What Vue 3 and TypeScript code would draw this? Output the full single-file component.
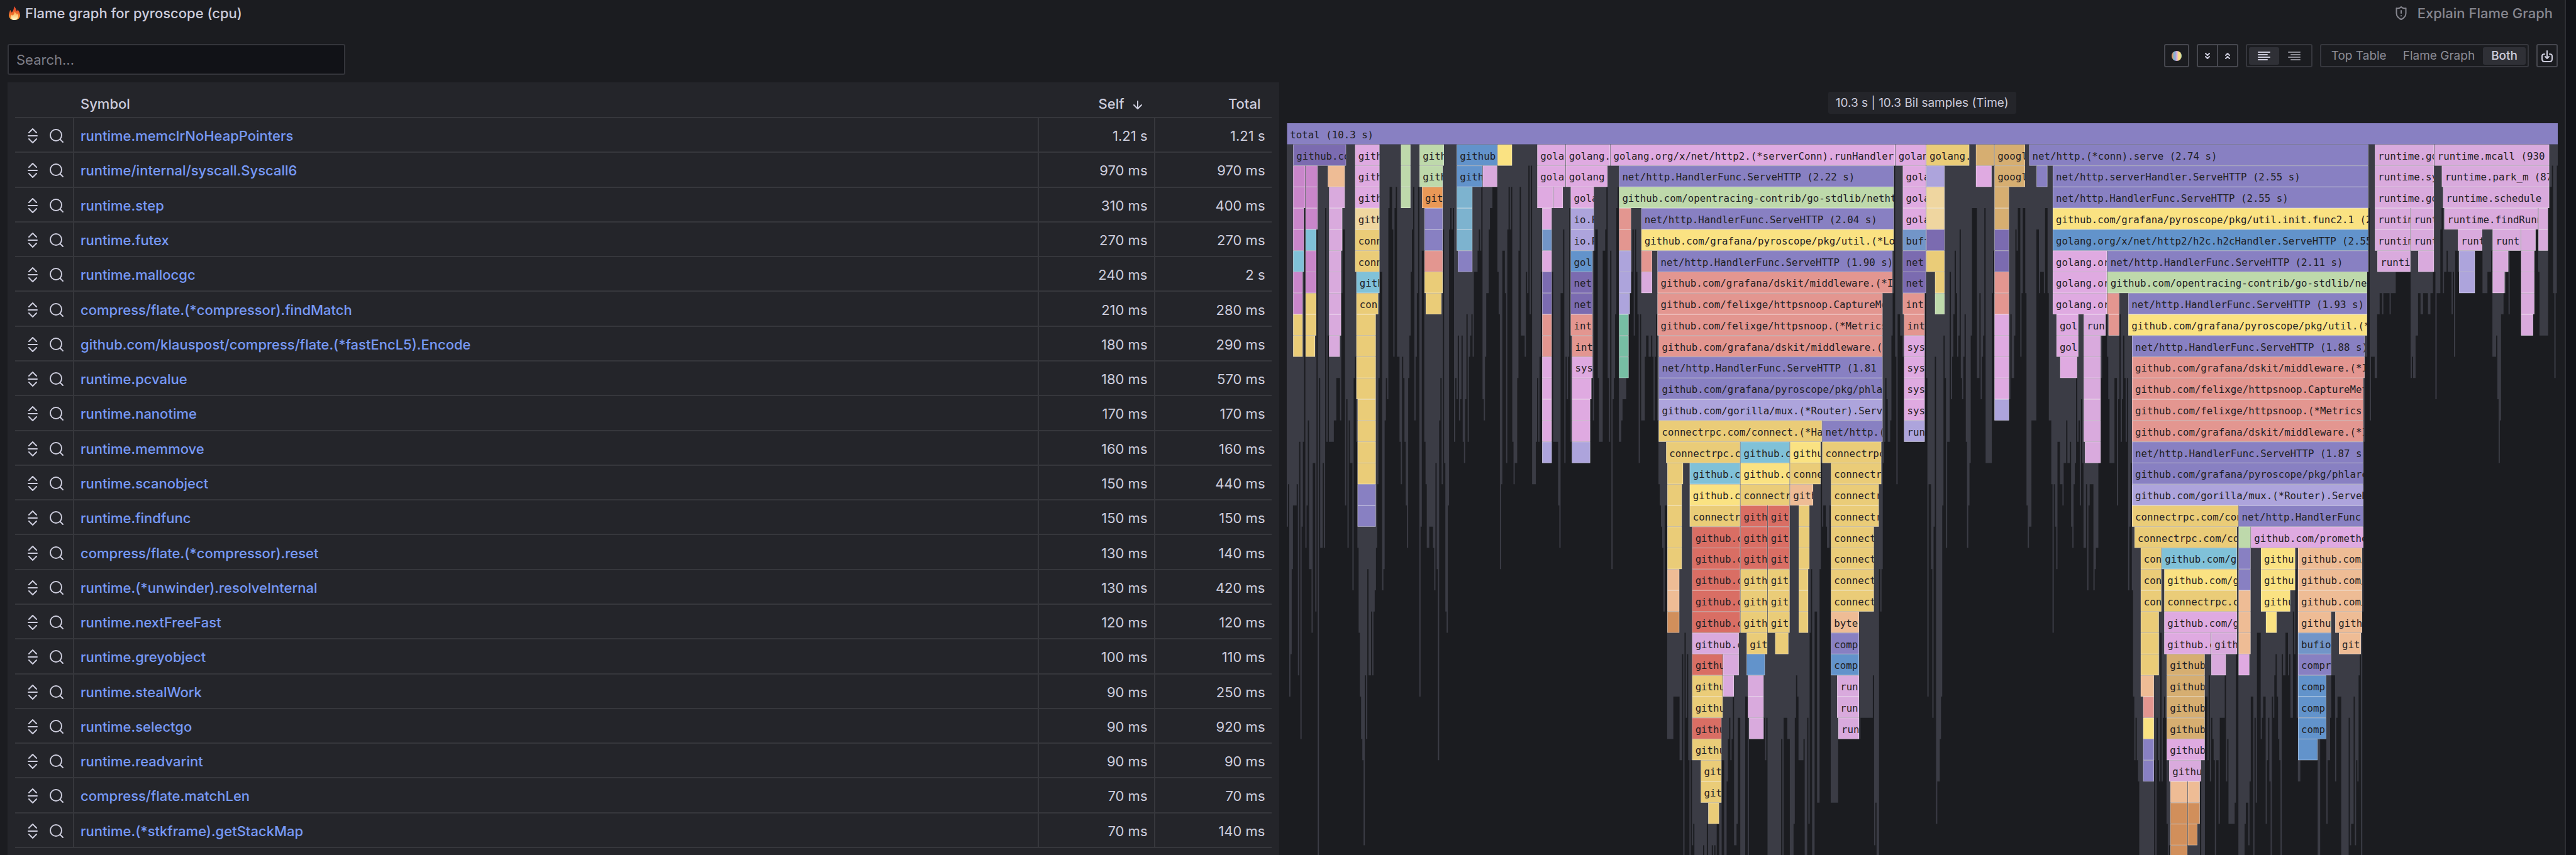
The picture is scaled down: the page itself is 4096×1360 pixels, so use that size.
<script setup lang="ts">
import { computed, ref } from 'vue'

interface SymbolRow { name: string; self: string; total: string }

const symbols: SymbolRow[] = [
  { name: 'runtime.memclrNoHeapPointers', self: '1.21 s', total: '1.21 s' },
  { name: 'runtime/internal/syscall.Syscall6', self: '970 ms', total: '970 ms' },
  { name: 'runtime.step', self: '310 ms', total: '400 ms' },
  { name: 'runtime.futex', self: '270 ms', total: '270 ms' },
  { name: 'runtime.mallocgc', self: '240 ms', total: '2 s' },
  { name: 'compress/flate.(*compressor).findMatch', self: '210 ms', total: '280 ms' },
  { name: 'github.com/klauspost/compress/flate.(*fastEncL5).Encode', self: '180 ms', total: '290 ms' },
  { name: 'runtime.pcvalue', self: '180 ms', total: '570 ms' },
  { name: 'runtime.nanotime', self: '170 ms', total: '170 ms' },
  { name: 'runtime.memmove', self: '160 ms', total: '160 ms' },
  { name: 'runtime.scanobject', self: '150 ms', total: '440 ms' },
  { name: 'runtime.findfunc', self: '150 ms', total: '150 ms' },
  { name: 'compress/flate.(*compressor).reset', self: '130 ms', total: '140 ms' },
  { name: 'runtime.(*unwinder).resolveInternal', self: '130 ms', total: '420 ms' },
  { name: 'runtime.nextFreeFast', self: '120 ms', total: '120 ms' },
  { name: 'runtime.greyobject', self: '100 ms', total: '110 ms' },
  { name: 'runtime.stealWork', self: '90 ms', total: '250 ms' },
  { name: 'runtime.selectgo', self: '90 ms', total: '920 ms' },
  { name: 'runtime.readvarint', self: '90 ms', total: '90 ms' },
  { name: 'compress/flate.matchLen', self: '70 ms', total: '70 ms' },
  { name: 'runtime.(*stkframe).getStackMap', self: '70 ms', total: '140 ms' },
]

const query = ref('')
const align = ref('left')
const view = ref('Both')
const views = ['Top Table', 'Flame Graph', 'Both']

const visibleSymbols = computed(() =>
  symbols.filter((s) => s.name.toLowerCase().includes(query.value.toLowerCase())),
)

// Flame graph geometry: every sample is UNIT wide and every level ROW high.
const SAMPLES = 1026
const LEVELS = 35
const UNIT = 7
const ROW = 120

const palette: Record<string, string> = {
  P: '#8880c2', D: '#7b6bb0', L: '#ada4dc', K: '#dfaae1', R: '#d9aadd',
  M: '#c986ca', T: '#80c1d8', Y: '#eacc78', B: '#fae282', G: '#bed9ab',
  O: '#e99857', S: '#e39690', X: '#d96e64', U: '#6293cb', V: '#7295c8',
  W: '#7db3cf', E: '#efd6a0', A: '#d6ae71', H: '#eebc95', N: '#d18f5b',
  Z: '#77bea4',
}

// Stack depth by sample: "first sample:depth", valid up to the next entry.
const depths = `
0:19 1:17 2:27 3:25 4:21 5:18 8:17 9:26 10:15 11:29 12:19 13:15 14:4 15:20 16:18 17:14 18:21 20:24
21:16 23:23 24:5 25:35 26:12 27:20 29:16 30:20 31:4 32:15 33:10 34:15 38:14 40:12 43:14 44:8 45:5
47:18 48:13 49:20 50:14 51:16 53:22 54:12 55:11 56:15 57:20 58:24 59:27 60:29 61:30 62:34 63:26
64:29 65:21 66:26 68:23 69:26 70:23 71:22 72:20 73:17 74:12 75:7 77:22 78:21 79:14 80:12 81:13
82:4 83:3 85:5 86:11 87:4 88:3 89:11 91:15 92:17 93:11 94:12 95:15 96:18 97:20 98:12 99:10 100:7
101:5 102:3 103:14 104:11 105:8 106:3 107:27 108:19 109:6 111:15 112:17 113:20 115:19 118:20
119:22 120:16 121:21 122:30 123:14 124:12 125:17 126:5 127:16 128:23 129:24 130:18 131:5 132:4
133:5 134:4 135:15 136:12 137:13 138:10 139:14 140:13 141:10 142:15 143:16 144:13 145:9 146:15
147:11 148:10 149:9 150:11 151:7 154:6 155:5 156:6 157:3 158:13 159:14 160:11 161:8 163:5 164:4
166:3 170:7 171:9 172:21 173:17 174:6 176:8 177:16 178:5 179:3 180:5 181:3 182:15 183:17 184:16
186:12 187:6 188:3 189:10 192:11 193:7 194:8 195:2 196:9 197:2 198:17 201:15 202:12 203:15 204:11
205:7 206:16 214:7 215:15 219:18 220:20 221:8 223:5 224:16 225:11 226:13 227:11 228:4 229:15
230:16 245:13 246:12 247:14 248:6 249:5 251:12 252:15 255:6 257:5 258:3 259:12 260:15 261:6
262:21 263:13 264:12 265:9 266:4 267:3 268:15 270:14 271:13 274:12 276:9 277:8 278:7 279:5 280:10
281:5 282:7 283:9 284:16 285:9 286:14 289:11 290:10 292:11 294:10 295:11 296:14 297:11 298:9
299:14 300:17 301:18 302:19 303:20 304:23 305:18 307:29 312:27 317:30 319:25 320:35 321:24 322:28
323:25 324:30 325:35 326:30 327:34 328:33 329:35 336:34 337:35 339:33 340:35 343:34 344:35 345:34
346:35 347:33 349:35 351:30 353:35 355:31 356:29 357:28 358:30 359:29 360:27 361:34 363:33 364:28
366:35 370:27 372:35 373:29 385:28 386:30 387:28 388:35 399:29 400:35 401:28 404:29 406:35 409:33
410:28 411:26 412:27 413:30 417:29 418:35 420:28 421:33 422:24 423:21 424:35 426:23 428:32 430:21
431:16 432:19 433:18 435:19 436:20 438:18 439:32 445:29 463:28 473:26 474:34 475:32 476:35 478:21
479:23 480:21 481:16 482:15 483:12 484:13 485:15 487:14 488:10 489:8 490:2 491:11 492:17 493:9
495:10 497:11 498:15 515:8 516:12 517:27 518:17 520:21 521:28 522:19 523:11 524:33 525:31 527:29
528:27 529:18 530:10 531:12 532:20 533:15 535:7 536:13 537:11 538:9 539:6 540:8 541:11 542:10
543:5 544:12 545:13 546:11 547:9 548:15 549:20 550:18 551:16 552:10 553:4 557:12 559:8 560:13
561:11 562:10 563:4 564:16 569:8 570:6 571:14 583:13 584:9 585:12 587:10 588:5 589:6 590:4 592:11
593:8 594:4 596:8 597:18 598:20 599:19 601:14 605:5 607:8 608:7 611:8 612:4 614:8 615:14 617:17
618:24 619:17 620:19 621:21 622:15 624:17 626:18 627:16 629:14 630:16 632:15 633:19 634:20 635:17
636:16 637:12 638:15 639:14 640:18 641:13 642:16 643:20 645:17 646:22 647:18 648:17 651:22 652:21
653:20 655:16 657:12 658:10 661:9 662:11 663:13 664:16 668:12 670:18 671:13 672:9 673:15 674:13
675:10 676:12 677:15 678:12 679:22 680:19 681:16 682:22 683:27 684:30 685:28 686:30 687:31 688:35
700:30 701:35 702:28 703:30 704:31 705:24 706:31 707:28 708:27 709:28 710:33 711:35 712:34 713:35
737:31 738:35 741:27 743:30 744:26 745:31 746:28 747:29 748:30 749:35 750:30 752:33 753:28 757:26
758:31 759:29 760:33 765:32 766:25 768:35 773:33 774:32 776:34 777:31 778:27 780:35 781:28 782:32
783:24 786:29 787:28 788:27 790:33 791:30 792:28 793:31 794:35 795:27 796:28 797:26 798:25 799:27
800:29 801:30 802:35 803:25 804:26 806:24 808:26 809:25 810:28 812:23 813:25 814:21 815:28 816:31
818:30 832:35 834:29 839:33 840:30 842:28 843:26 846:31 847:28 848:27 851:35 857:28 858:34 859:33
861:27 862:34 863:30 864:31 865:26 866:25 867:35 868:23 869:15 870:11 872:7 873:4 874:14 875:11
878:12 880:9 882:8 884:9 885:8 890:9 891:8 895:7 907:12 908:11 909:12 911:10 913:8 915:9 917:8
921:9 923:8 925:7 927:13 928:8 931:5 932:4 933:8 934:7 936:6 937:7 940:9 941:7 942:11 943:6 945:7
946:8 959:6 965:8 969:7 972:6 973:11 976:10 977:13 978:16 979:14 980:9 982:8 984:7 986:9 987:6
996:10 1006:9 1007:6 1008:5 1010:7 1011:10 1018:4 1019:3 1021:2 1022:8 1023:12 1024:8 1025:2`

// Outline of everything below the root; frames too narrow for a colour keep this fill.
const silhouette = computed(() => {
  const steps = depths.trim().split(/\s+/).map((entry) => entry.split(':').map(Number))
  let d = `M0 ${ROW}`
  for (const [start, depth] of steps) d += `H${start * UNIT}V${depth * ROW}`
  return `${d}H${SAMPLES * UNIT}V${ROW}Z`
})

// One line per frame: first level, last level, first sample, end sample, colour, label.
const frameData = `
0 0 0 1026 P total (10.3 s)
1 1 5 48 D github.co
2 3 5 15 M
4 5 5 14 M
6 6 5 14 T
7 8 5 13 M
9 10 5 13 Y
2 4 15 25 M
5 5 15 24 T
6 7 15 24 M
8 9 15 24 Y
10 10 15 23 Y
2 2 33 47 H
3 3 34 47 R
4 5 34 45 R
6 9 34 44 R
10 10 34 43 R
1 3 55 75 K gith
4 4 55 75 E gith
5 6 55 75 Y conn
7 7 56 75 T gith
8 8 56 74 Y con
9 12 56 72 Y
13 16 57 72 Y
17 18 57 72 P
1 3 92 100 G
1 1 107 127 G gith
2 2 107 126 G gith
3 3 109 126 O git
4 5 111 126 P
6 6 111 126 S
7 7 111 126 Y
8 8 112 125 Y
1 1 137 170 U github
2 2 137 158 U gith
3 5 137 150 W
6 6 138 150 P
1 1 170 182 B
2 2 158 170 R
1 2 202 225 K gola
3 3 202 215 K
3 3 215 223 K
4 4 206 214 K
5 5 206 214 V
6 6 206 214 K
7 8 206 214 D
9 10 206 214 S
11 14 206 214 K
15 15 206 214 L
1 1 225 261 K golang.
2 2 225 259 K golang
3 3 229 248 K gola
4 5 229 248 L io.R
6 6 229 247 U gol
7 8 229 247 D net
9 9 229 247 S int
10 10 230 247 S int
11 11 230 247 K sys
12 12 230 246 K
13 14 230 245 K
15 15 230 245 L
1 1 261 491 K golang.org/x/net/http2.(*serverConn).runHandler
2 2 268 490 P net/http.HandlerFunc.ServeHTTP (2.22 s)
3 3 268 490 G github.com/opentracing-contrib/go-stdlib/netht
4 5 268 278 S
6 7 268 278 L
8 8 268 277 L
9 11 268 276 Z
4 4 286 490 P net/http.HandlerFunc.ServeHTTP (2.04 s)
5 5 286 490 B github.com/grafana/pyroscope/pkg/util.(*Lo
6 6 286 295 S
7 7 286 295 R
6 6 299 489 P net/http.HandlerFunc.ServeHTTP (1.90 s)
7 7 299 489 S github.com/grafana/dskit/middleware.(*I
8 8 299 481 S github.com/felixge/httpsnoop.CaptureMe
9 9 299 481 S github.com/felixge/httpsnoop.(*Metrics
10 10 300 481 S github.com/grafana/dskit/middleware.(
11 11 300 481 P net/http.HandlerFunc.ServeHTTP (1.81
12 12 300 481 P github.com/grafana/pyroscope/pkg/phla
13 13 300 481 L github.com/gorilla/mux.(*Router).Serv
14 14 300 432 Y connectrpc.com/connect.(*Ha
14 14 432 481 P net/http.(
15 15 306 366 Y connectrpc.c
15 15 366 406 T github.c
15 15 406 431 B githu
15 15 432 480 Y connectrpc
16 16 307 320 Y
17 20 307 319 Y
21 22 307 317 H
23 23 307 317 N
16 16 325 366 T github.c
17 17 325 366 B github.c
18 18 325 366 Y connectr
19 23 327 366 X github.c
24 24 327 365 R github.c
25 25 327 352 X githu
26 27 327 352 Y githu
28 28 327 351 X githu
29 29 327 351 Y githu
30 31 334 351 Y git
32 32 340 349 Y
25 25 352 365 R
26 26 352 361 R
16 16 366 406 B github.c
17 17 366 406 Y connectr
18 20 366 388 X gith
18 20 388 406 X git
21 23 366 388 Y gith
21 23 388 406 Y git
24 24 371 388 Y git
24 24 394 405 Y
25 25 371 386 U
26 27 372 385 R
28 28 373 385 R
16 16 406 431 Y conne
17 17 406 425 H gith
18 20 413 422 Y
21 23 413 421 Y
16 16 439 480 Y connectr
17 18 439 478 Y connectr
19 22 439 474 Y connect
23 23 439 462 H byte
24 24 439 462 P comp
25 25 439 462 U comp
26 27 444 462 R run
28 28 445 462 R run
1 1 491 516 K golan
2 4 497 516 K gola
5 5 497 516 V buff
6 7 497 516 D net
8 8 497 515 S int
9 9 498 515 S int
10 13 498 515 K sys
14 14 498 515 L run
1 1 516 551 Y golang.
2 2 516 531 L
3 4 516 531 E
5 5 516 531 D
6 6 516 531 Y
7 7 523 531 Y
8 8 523 531 G
1 1 556 571 A
2 2 556 569 K
1 2 571 596 A googl
3 4 571 583 A
5 6 571 583 D
7 8 571 583 S
9 12 571 583 K
13 13 571 583 L
1 1 599 873 P net/http.(*conn).serve (2.74 s)
2 2 605 614 P
2 2 618 873 P net/http.serverHandler.ServeHTTP (2.55 s)
3 3 618 873 P net/http.HandlerFunc.ServeHTTP (2.55 s)
4 4 618 873 B github.com/grafana/pyroscope/pkg/util.init.func2.1 (2
5 5 618 873 U golang.org/x/net/http2/h2c.h2cHandler.ServeHTTP (2.55
6 8 618 662 K golang.or
9 10 621 639 K gol
11 11 624 638 K
9 9 643 661 R run
10 14 643 657 R
15 15 644 657 R
6 6 662 873 P net/http.HandlerFunc.ServeHTTP (2.11 s)
7 7 662 872 G github.com/opentracing-contrib/go-stdlib/net
8 8 662 672 S
9 9 663 672 S
8 8 679 872 P net/http.HandlerFunc.ServeHTTP (1.93 s)
9 9 679 872 B github.com/grafana/pyroscope/pkg/util.(*
10 10 682 870 P net/http.HandlerFunc.ServeHTTP (1.88 s)
11 11 682 870 S github.com/grafana/dskit/middleware.(*I
12 12 682 869 S github.com/felixge/httpsnoop.CaptureMet
13 13 682 869 S github.com/felixge/httpsnoop.(*Metrics)
14 14 682 869 S github.com/grafana/dskit/middleware.(*I
15 15 682 869 P net/http.HandlerFunc.ServeHTTP (1.87 s)
16 16 682 869 P github.com/grafana/pyroscope/pkg/phlare
17 17 682 869 L github.com/gorilla/mux.(*Router).ServeH
18 18 682 768 Y connectrpc.com/con
18 18 768 869 P net/http.HandlerFunc
19 19 684 767 Y connectrpc.com/co
19 19 768 778 G
19 19 778 869 K github.com/promethe
20 22 689 706 Y con
23 25 689 704 Y
26 26 689 700 H
27 27 691 700 S
28 28 691 700 B
29 30 691 700 P
20 20 706 767 T github.com/g
21 21 708 767 B github.com/g
22 22 708 767 Y connectrpc.c
23 23 708 767 K github.com/g
24 24 708 746 K github.c
24 24 746 767 R gith
25 28 710 741 A github
25 25 746 758 R
29 29 710 741 K github
30 30 712 738 R githu
31 31 713 727 H
31 31 727 737 H
32 34 713 727 N
32 32 727 737 N
33 33 727 735 N
20 21 768 778 P
22 24 768 778 H
25 25 768 777 K
20 21 786 814 B githu
22 22 786 810 B githu
23 23 790 799 B
20 22 816 868 H github.com/
23 23 816 843 H githu
23 23 846 868 H gith
24 24 816 843 V bufio
24 24 849 867 H git
25 25 816 843 P compr
26 28 816 839 U comp
29 29 816 832 U
1 1 878 926 R runtime.go
2 2 878 926 R runtime.sy
3 3 878 926 R runtime.go
4 5 878 907 R runtim
4 5 907 926 R runt
6 6 880 907 R runti
6 6 913 926 R
1 1 926 1019 R runtime.mcall (930
2 2 932 1019 R runtime.park_m (87
3 3 933 1019 R runtime.schedule (
4 4 934 1010 R runtime.findRunn
4 5 1010 1018 R
5 5 945 965 R runt
5 5 973 996 R runt
5 5 996 1008 R
6 7 946 959 L
6 6 973 986 R
7 7 973 983 R
6 8 996 1007 R
9 9 996 1006 R`

interface Frame { key: string; x: number; y: number; w: number; fill: string; label: string }

const frames = computed<Frame[]>(() =>
  frameData.trim().split('\n').flatMap((line) => {
    const [first, last, start, end, color, ...label] = line.split(' ')
    const list: Frame[] = []
    for (let level = +first; level <= +last; level++) {
      list.push({
        key: `${level}-${start}`,
        x: +start * UNIT + 1,
        y: level * ROW,
        w: (+end - +start) * UNIT - 2,
        fill: palette[color],
        label: label.join(' '),
      })
    }
    return list
  }),
)
</script>

<template>
  <div class="app">
    <main class="panel">
      <header class="title-bar">
        <h1>
          <svg class="fire" viewBox="0 0 18 22" aria-hidden="true">
            <defs>
              <linearGradient id="fire-outer" x1="0" y1="0" x2="0" y2="1">
                <stop offset="0" stop-color="#d8402a" />
                <stop offset="0.6" stop-color="#f0702c" />
                <stop offset="1" stop-color="#fbb63c" />
              </linearGradient>
              <linearGradient id="fire-inner" x1="0" y1="0" x2="0" y2="1">
                <stop offset="0" stop-color="#fba43a" />
                <stop offset="1" stop-color="#fffbd0" />
              </linearGradient>
            </defs>
            <path fill="url(#fire-outer)" d="M8 0C11 2 12 5 12.500 8C13.500 7.500 14 6 14 5C16.500 8 18 11 18 14.500C18 19 14 22 9 22C4 22 0 19 0 14C0 11 1.500 9 2 6C3.500 7 4 8 4.500 10C7 7.500 8.500 4 8 0Z" />
            <path fill="url(#fire-inner)" d="M9 8C10 10 12.500 11.500 12.500 13C13.500 12.500 13.800 12 14 11.500C15.500 14 15 17 14 19C13 21 11 22 9 22C6 22 3.500 20 3.500 17C3.500 15.500 4 14.500 4.500 13.500C5.500 14 6 14.500 6.500 15C8 13 9 11 9 8Z" />
          </svg>
          Flame graph for pyroscope (cpu)
        </h1>
        <button class="explain" type="button">
          <svg viewBox="0 0 18 22" aria-hidden="true" fill="none" stroke="currentColor" stroke-width="2" stroke-linecap="round" stroke-linejoin="round">
            <path d="M9 1C7 3 4 3.500 1.500 3V11C1.500 15.500 5 19 9 21C13 19 16.500 15.500 16.500 11V3C14 3.500 11 3 9 1Z" />
            <path d="M9 7V11M9 15V15.200" />
          </svg>
          Explain Flame Graph
        </button>
      </header>

      <div class="toolbar">
        <input v-model="query" class="search" type="text" placeholder="Search..." aria-label="Search symbols" />
        <div class="tools">
          <button class="tool color" type="button" aria-label="Change color scheme"><span class="swatch"></span></button>
          <div class="pair">
            <button type="button" aria-label="Expand all groups">
              <svg viewBox="0 0 14 14" aria-hidden="true"><path d="M4 3L7 6L10 3M4 8L7 11L10 8" /></svg>
            </button>
            <button type="button" aria-label="Collapse all groups">
              <svg viewBox="0 0 14 14" aria-hidden="true"><path d="M4 6L7 3L10 6M4 11L7 8L10 11" /></svg>
            </button>
          </div>
          <div class="group" role="radiogroup" aria-label="Text alignment">
            <label :class="{ on: align === 'left' }">
              <input v-model="align" type="radio" name="align" value="left" aria-label="Align left" />
              <svg viewBox="0 0 22 20" aria-hidden="true"><path d="M2 4H20M2 8H16M2 12H20M2 16H16" /></svg>
            </label>
            <label :class="{ on: align === 'right' }">
              <input v-model="align" type="radio" name="align" value="right" aria-label="Align right" />
              <svg viewBox="0 0 22 20" aria-hidden="true"><path d="M2 4H20M6 8H20M2 12H20M6 16H20" /></svg>
            </label>
          </div>
          <div class="group" role="radiogroup" aria-label="View">
            <label v-for="name in views" :key="name" :class="{ on: view === name }">
              <input v-model="view" type="radio" name="view" :value="name" />{{ name }}
            </label>
          </div>
          <button class="tool save" type="button" aria-label="Export data">
            <svg viewBox="0 0 18 28" aria-hidden="true"><path d="M9 6V18M6 15L9 18L12 15M5 11C2 11 1 12 1 14V19C1 22 2 23 5 23H13C16 23 17 22 17 19V14C17 12 16 11 13 11" /></svg>
          </button>
        </div>
      </div>

      <div class="content">
        <section class="top-table">
          <table>
            <colgroup>
              <col class="col-actions" />
              <col />
              <col class="col-value" />
              <col class="col-value" />
            </colgroup>
            <thead>
              <tr>
                <th scope="col"></th>
                <th scope="col">Symbol</th>
                <th scope="col" class="num sorted">
                  Self
                  <svg class="sort" viewBox="0 0 16 16" aria-hidden="true"><path d="M8 2V14M2 8L8 14L14 8" /></svg>
                </th>
                <th scope="col" class="num">Total</th>
              </tr>
            </thead>
            <tbody>
              <tr v-for="row in visibleSymbols" :key="row.name">
                <td class="actions">
                  <div>
                    <button type="button" :aria-label="`Sandwich view of ${row.name}`">
                      <svg viewBox="0 0 24 24" aria-hidden="true"><path d="M6 7L12 1L18 7M5 12H19M6 17L12 23L18 17" /></svg>
                    </button>
                    <button type="button" :aria-label="`Search for ${row.name}`">
                      <svg viewBox="0 0 24 24" aria-hidden="true"><circle cx="11" cy="11" r="9" /><path d="M17.500 17.500L22 22" /></svg>
                    </button>
                  </div>
                </td>
                <td><a href="#">{{ row.name }}</a></td>
                <td class="num">{{ row.self }}</td>
                <td class="num">{{ row.total }}</td>
              </tr>
            </tbody>
          </table>
        </section>

        <section class="flame">
          <p class="summary">10.3 s | 10.3 Bil samples (Time)</p>
          <svg class="graph" :viewBox="`0 0 ${SAMPLES * UNIT} ${LEVELS * ROW}`" role="img" aria-label="Flame graph">
            <path class="muted" :d="silhouette" />
            <svg v-for="f in frames" :key="f.key" :x="f.x" :y="f.y" :width="f.w" :height="ROW">
              <rect :class="{ framed: f.y > 0 }" width="100%" height="100%" :fill="f.fill" />
              <text v-if="f.label" x="18" y="85">{{ f.label }}</text>
            </svg>
          </svg>
        </section>
      </div>
    </main>
  </div>
</template>

<style>
body {
  margin: 0;
  background: #111217;
}
</style>

<style scoped>
.app {
  box-sizing: border-box;
  height: 100vh;
  padding-right: 16px;
  overflow: hidden;
  background: #111217;
  color: #ccccdc;
  font-family: Inter, "Liberation Sans", sans-serif;
  font-size: 22px;
  line-height: 28px;
}

.panel {
  display: flex;
  flex-direction: column;
  box-sizing: border-box;
  height: 100%;
  padding: 0 11px 0 12px;
  border-right: 2px solid #2d2e33;
  background: #1b1c20;
}

button {
  margin: 0;
  padding: 0;
  border: 0;
  background: none;
  color: inherit;
  font: inherit;
}

svg path,
svg circle {
  stroke-linecap: round;
  stroke-linejoin: round;
}

.title-bar {
  display: flex;
  align-items: center;
  justify-content: space-between;
  height: 41px;
  margin-bottom: 29px;
}

h1 {
  display: flex;
  align-items: center;
  gap: 8px;
  margin: 0;
  padding-left: 2px;
  font-size: 22px;
  font-weight: 500;
}

.fire {
  width: 18px;
  height: 22px;
}

.explain {
  display: flex;
  align-items: center;
  gap: 17px;
  margin-right: 8px;
  color: #86868f;
  font-weight: 500;
}

.explain svg {
  width: 18px;
  height: 22px;
}

.toolbar {
  display: flex;
  align-items: flex-start;
  justify-content: space-between;
  height: 49px;
  margin-bottom: 12px;
}

.search {
  box-sizing: border-box;
  width: 537px;
  height: 49px;
  padding: 0 12px;
  border: 2px solid #34353b;
  border-radius: 3px;
  background: #111217;
  color: #ccccdc;
  font: inherit;
}

.search::placeholder {
  color: #7e7e88;
  opacity: 1;
}

.tools {
  display: flex;
  gap: 12px;
  height: 37px;
  font-size: 19px;
  line-height: 28px;
}

.tool,
.pair,
.group {
  display: flex;
  align-items: center;
  justify-content: center;
  box-sizing: border-box;
  height: 37px;
  border: 2px solid #46474e;
  border-radius: 3px;
}

.color {
  width: 40px;
}

.save {
  width: 34px;
}

.save svg {
  width: 18px;
  height: 28px;
}

.save path,
.pair path {
  fill: none;
  stroke: #ccccdc;
  stroke-width: 2;
}

.swatch {
  width: 16px;
  height: 16px;
  border-radius: 50%;
  background: linear-gradient(90deg, #e8955c 5%, #7db8cf 25%, #a9a3da 42%, #e6b3dc 54%, #f7dd86 68%, #f7dd86 84%, #a9d6b0 100%);
}

.pair {
  width: 66px;
}

.pair button {
  display: flex;
  flex: 1;
  align-items: center;
  justify-content: center;
  height: 33px;
}

.pair button + button {
  border-left: 2px solid #46474e;
}

.pair svg {
  width: 14px;
  height: 14px;
}

.group {
  padding: 0 3px;
  border-color: #36373d;
}

.group label {
  display: flex;
  align-items: center;
  height: 28px;
  padding: 0 13px;
  border-radius: 3px;
  color: #8c8c96;
}

.group label.on {
  background: #2f3036;
  color: #ccccdc;
  font-weight: 500;
}

.group input {
  position: absolute;
  width: 1px;
  height: 1px;
  margin: 0;
  opacity: 0;
}

.group svg {
  width: 22px;
  height: 20px;
}

.group path {
  fill: none;
  stroke: currentColor;
  stroke-width: 2;
}

.content {
  display: grid;
  flex: 1;
  grid-template-columns: 1fr 1fr;
  gap: 12px;
  min-height: 0;
}

.top-table {
  box-sizing: border-box;
  min-height: 0;
  padding: 0 12px;
  background: #24252a;
}

table {
  width: 100%;
  height: calc(100% - 11px);
  border-collapse: separate;
  border-spacing: 0;
  table-layout: fixed;
}

.col-actions {
  width: 94px;
}

.col-value {
  width: 185px;
}

th,
td {
  padding: 3px 10px 0;
  border-bottom: 2px solid #36373c;
  text-align: left;
  white-space: nowrap;
}

th {
  height: 42px;
  padding-top: 13px;
  font-weight: 500;
}

td:not(:last-child) {
  border-right: 2px solid #36373c;
}

th.num,
td.num {
  text-align: right;
}

th.num {
  padding-right: 17px;
}

th.sorted {
  padding-right: 20px;
}

.sort {
  width: 16px;
  height: 16px;
  margin-left: 7px;
  vertical-align: -2px;
}

.sort path {
  fill: none;
  stroke: currentColor;
  stroke-width: 2;
}

.actions div {
  display: flex;
  align-items: center;
  gap: 14px;
  padding-left: 6px;
}

.actions button {
  display: flex;
}

.actions svg {
  width: 24px;
  height: 24px;
}

.actions path,
.actions circle {
  fill: none;
  stroke: #ccccdc;
  stroke-width: 2;
}

td a {
  color: #7799f6;
  font-weight: 500;
  text-decoration: none;
}

.flame {
  display: flex;
  flex-direction: column;
  align-items: center;
  gap: 15px;
  min-height: 0;
  padding-top: 15px;
  overflow: hidden;
}

.summary {
  flex: none;
  margin: 0;
  padding: 0 12px;
  border-radius: 3px;
  background: #24252a;
  font-size: 19px;
  line-height: 35px;
}

.graph {
  display: block;
  flex: none;
  width: 100%;
}

.graph text {
  fill: #1f2023;
  font-family: "DejaVu Sans Mono", monospace;
  font-size: 56px;
  white-space: pre;
}

.muted {
  fill: #3b3c45;
}

.framed {
  stroke: #ffffff;
  stroke-opacity: 0.6;
  stroke-width: 4;
}
</style>
